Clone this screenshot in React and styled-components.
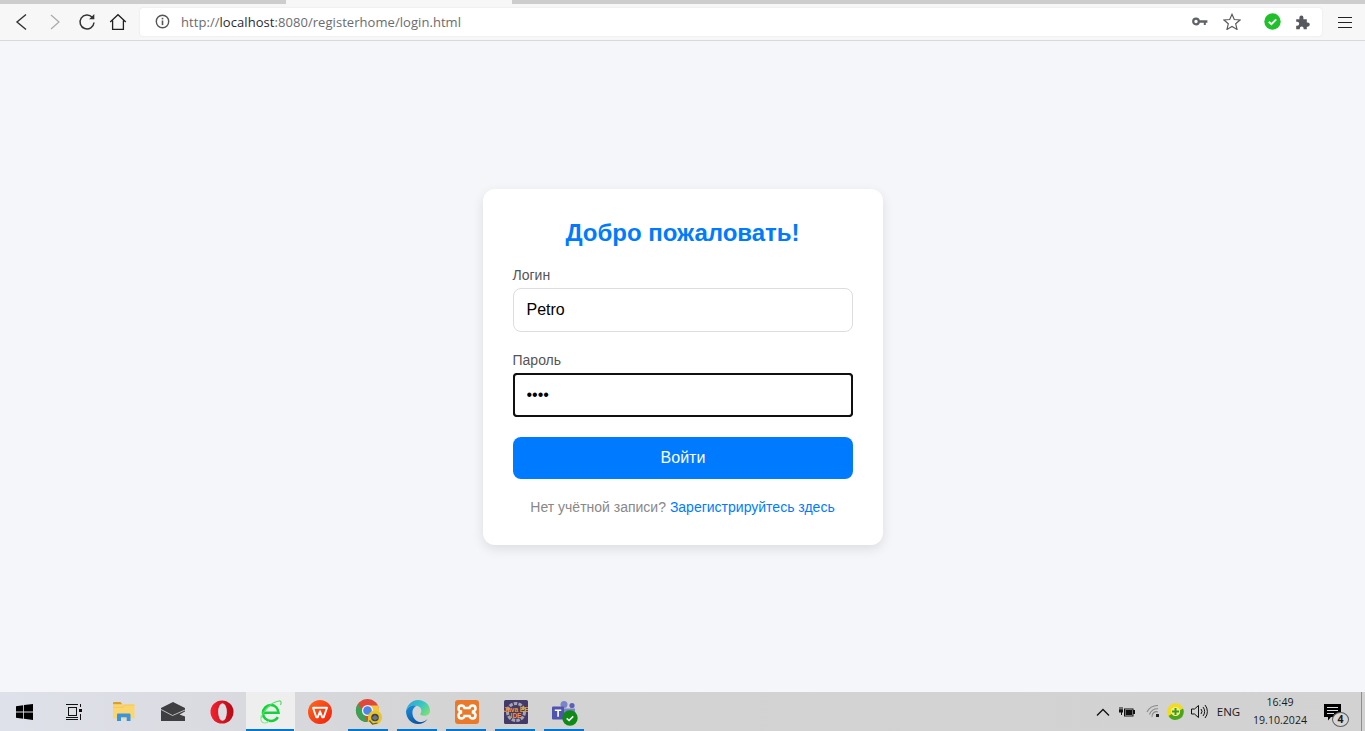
import styled, { createGlobalStyle } from "styled-components";

const GlobalStyle = createGlobalStyle`
  html, body {
    margin: 0;
    padding: 0;
    height: 100%;
    overflow: hidden;
  }
  * {
    box-sizing: border-box;
  }
`;

const Windowed = styled.div`
  height: 100vh;
  display: flex;
  flex-direction: column;
  background: #f4f6f9;
  font-family: "Liberation Sans", Arial, sans-serif;
`;

/* browser chrome */
const TabStrip = styled.div`
  height: 4px;
  display: flex;
  background: #cdcdcd;
`;
const TabPiece = styled.div`
  width: ${(p) => p.$w}px;
  background: ${(p) => p.$bg};
`;
const Toolbar = styled.div`
  height: 37px;
  display: flex;
  align-items: center;
  padding: 0 0 1px 4px;
  background: #f7f7f7;
  border-bottom: 1px solid #d9d9d9;
`;
const Slot = styled.div`
  width: ${(p) => p.$w}px;
  flex: none;
  display: flex;
  align-items: center;
  justify-content: center;
`;
const AddressBar = styled.div`
  width: 1182px;
  height: 28px;
  margin-left: 6px;
  padding: 0 4px 0 10px;
  display: flex;
  align-items: center;
  background: #fff;
  border-radius: 3px;
  box-shadow: 0 0 2px rgba(0, 0, 0, 0.1);
`;
const Url = styled.div`
  margin-left: 7px;
  flex: 1;
  font: 13px "Open Sans", sans-serif;
  letter-spacing: 0.055px;
  color: #6b6b70;
  b {
    font-weight: 400;
    color: #2a2a2e;
  }
`;
const MenuSlot = styled(Slot)`
  margin-left: 3px;
`;

/* login form */
const Main = styled.main`
  flex: 1;
  display: flex;
  align-items: center;
  justify-content: center;
`;
const Card = styled.form`
  width: 400px;
  padding: 30px;
  background: #fff;
  border-radius: 12px;
  box-shadow: 0 4px 12px rgba(0, 0, 0, 0.1);
`;
const Title = styled.h2`
  margin: 0 0 20px;
  text-align: center;
  font-size: 24px;
  line-height: 28px;
  font-weight: 700;
  color: #007bff;
`;
const Field = styled.div`
  margin-bottom: 20px;
`;
const Label = styled.label`
  display: block;
  margin-bottom: 5px;
  font-size: 14px;
  line-height: 16px;
  color: #555;
`;
const Input = styled.input`
  display: block;
  width: 100%;
  height: 44px;
  padding: 0 12px 0 13px;
  font: 16px "Liberation Sans", Arial, sans-serif;
  color: #000;
  background: #fff;
  border: ${(p) => (p.$focused ? "1px solid #101010" : "1px solid #ddd")};
  border-radius: ${(p) => (p.$focused ? "4px" : "8px")};
  outline: ${(p) => (p.$focused ? "2px solid #101010" : "none")};
  outline-offset: -2px;
`;
const Submit = styled.button`
  display: block;
  width: 100%;
  height: 42px;
  padding: 0 0 0 1px;
  border: 0;
  border-radius: 8px;
  background: #007bff;
  color: #fff;
  font: 16px "Liberation Sans", Arial, sans-serif;
`;
const Footer = styled.p`
  margin: 20px 0 0;
  text-align: center;
  font-size: 14px;
  line-height: 16px;
  color: #888;
`;
const Register = styled.a`
  color: #007bff;
  text-decoration: none;
`;

/* windows taskbar */
const Taskbar = styled.div`
  height: 39px;
  display: flex;
  align-items: stretch;
  background: linear-gradient(90deg, #dfe1ea 0, #d9dadf 240px, #d3d3d3 480px, #d2d2d2 100%);
`;
const TaskItem = styled.div`
  position: relative;
  width: ${(p) => p.$w || 49}px;
  flex: none;
  display: flex;
  align-items: center;
  justify-content: center;
  background: ${(p) => (p.$active ? "#eeeeee" : "transparent")};
  &::after {
    content: "";
    display: ${(p) => (p.$running ? "block" : "none")};
    position: absolute;
    bottom: 0;
    left: ${(p) => (p.$active ? 0 : 4)}px;
    right: ${(p) => (p.$active ? 1 : 5)}px;
    height: 2px;
    background: #0078d4;
  }
`;
const Tray = styled.div`
  margin-left: auto;
  display: flex;
  align-items: center;
  color: #1a1a1a;
  font-family: "Open Sans", sans-serif;
`;
const Lang = styled.div`
  width: 37px;
  text-align: center;
  font-size: 11.5px;
`;
const Clock = styled.div`
  width: 66px;
  text-align: center;
  font-size: 10.6px;
  line-height: 18px;
  padding-bottom: 1px;
`;
const Notify = styled.div`
  position: relative;
  width: 28px;
  height: 28px;
  padding-top: 6px;
  margin: 0 9px 0 11px;
`;
const NotifyCount = styled.span`
  position: absolute;
  right: 3px;
  bottom: -1px;
  width: 17px;
  height: 15px;
  border-radius: 50%;
  border: 1px solid #5c5c5c;
  background: #d6d6d6;
  font: 700 10.5px/13px "Open Sans", sans-serif;
  text-align: center;
`;
const ShowDesktop = styled.div`
  width: 1px;
  align-self: stretch;
  background: #8f8f8f;
  margin-right: 3px;
`;

const Back = () => (
  <svg width="14" height="18" viewBox="0 0 14 18" fill="none" stroke="#333" strokeWidth="1.4">
    <path d="M12 1.5 3 9l9 7.5" />
  </svg>
);
const Forward = () => (
  <svg width="14" height="18" viewBox="0 0 14 18" fill="none" stroke="#aaa" strokeWidth="1.2">
    <path d="m3 2 8 7-8 7" />
  </svg>
);
const Reload = () => (
  <svg width="18" height="18" viewBox="0 0 18 18" fill="none" stroke="#333" strokeWidth="1.5">
    <path d="M14.2 4.2A7 7 0 1 0 16 9.5" />
    <path d="M16.3 1v5.2h-5.2z" fill="#333" stroke="none" />
  </svg>
);
const Home = () => (
  <svg width="18" height="18" viewBox="0 0 18 18" fill="none" stroke="#222" strokeWidth="1.3">
    <path d="M1.2 9 9 1.7 16.8 9M3.6 7.5v8.8h10.8V7.5" />
  </svg>
);
const Info = () => (
  <svg width="15" height="15" viewBox="0 0 15 15">
    <circle cx="7.5" cy="7.5" r="6.2" fill="none" stroke="#555" strokeWidth="1.4" />
    <rect x="6.7" y="6.5" width="1.6" height="4.6" fill="#555" />
    <rect x="6.7" y="3.8" width="1.6" height="1.6" fill="#555" />
  </svg>
);
const KeyIcon = () => (
  <svg width="16" height="10" viewBox="0 0 16 10">
    <circle cx="4" cy="4.5" r="2.8" fill="none" stroke="#5f6368" strokeWidth="2.2" />
    <path d="M7 3.2h8.4v2.6h-1.6v2.3h-2V5.8H7z" fill="#5f6368" />
  </svg>
);
const Star = () => (
  <svg width="18" height="17" viewBox="0 0 18 17" fill="none" stroke="#5a5a5a" strokeWidth="1.2">
    <path d="m9 1.3 2.3 5.2 5.7.5-4.3 3.8 1.3 5.6L9 13.5l-5 2.9 1.3-5.6L1 7l5.7-.5z" />
  </svg>
);
const CheckBadge = () => (
  <svg width="17" height="17" viewBox="0 0 17 17">
    <circle cx="8.5" cy="8.5" r="8.2" fill="#1fc02a" />
    <path d="m4.8 8.8 2.6 2.4 4.8-4.8" fill="none" stroke="#fff" strokeWidth="1.9" />
  </svg>
);
const Puzzle = () => (
  <svg width="16" height="16" viewBox="0 0 16 16">
    <path
      d="M1.2 5.2h3.2V3.4a2 2 0 0 1 4 0v1.8h3.4v3.3h.9a2.1 2.1 0 0 1 0 4.2h-.9v2.6H8.6v-1a1.9 1.9 0 0 0-3.8 0v1H1.2v-3.6h1a2 2 0 0 0 0-4h-1z"
      fill="#55585e"
    />
  </svg>
);
const Burger = () => (
  <svg width="14" height="12" viewBox="0 0 14 12" stroke="#222" strokeWidth="1" shapeRendering="crispEdges">
    <path d="M0 1h14M0 6h14M0 11h14" />
  </svg>
);

const WinLogo = () => (
  <svg width="17" height="16" viewBox="0 0 17 16" fill="#000">
    <path d="M0 2.3 7.2 1.3v6.3H0zM8 1.1 17 0v7.6H8zM0 8.4h7.2v6.3L0 13.7zM8 8.4h9V16l-9-1.2z" />
  </svg>
);
const TaskView = () => (
  <svg width="16" height="16" viewBox="0 0 16 16" fill="none" stroke="#111" strokeWidth="1" shapeRendering="crispEdges">
    <path d="M0 .5h12M2.500 3.500h8v8h-8zM0 13.500h12M0 15.500h12" />
    <path d="M14.500 0v3M14.500 9.500V16" />
    <rect x="13" y="5" width="3" height="3" fill="#111" stroke="none" />
  </svg>
);
const Explorer = () => (
  <svg width="22" height="19" viewBox="0 0 22 19">
    <path d="M0 1a1 1 0 0 1 1-1h6.500l2 2.500H0z" fill="#dba02a" />
    <path d="M0 2.500h21.500v13a1 1 0 0 1-1 1H1a1 1 0 0 1-1-1z" fill="#fbd56e" />
    <path d="M0 4.800h9.500l2-2.300h10v1.200H12L10 6H0z" fill="#f6ca5c" />
    <path d="M4 19v-6.300A1.200 1.200 0 0 1 5.200 11.500h11.100a1.200 1.200 0 0 1 1.200 1.200V19h-3.800v-3.800H8V19z" fill="#3a93de" />
  </svg>
);
const Mail = () => (
  <svg width="24" height="19" viewBox="0 0 24 19">
    <path d="M0 6 12 0l12 6v13H0z" fill="#3f3f41" />
    <path d="M24 9.500 18.500 12.500 24 14.500z" fill="#dadbe0" />
    <path d="M0 7.500 11.500 13.500 24 8" fill="none" stroke="#dadbe0" strokeWidth="0.800" />
  </svg>
);
const Opera = () => (
  <svg width="24" height="24" viewBox="0 0 24 24">
    <defs>
      <linearGradient id="opera" x1="0" y1="0" x2="1" y2="0">
        <stop offset="0" stopColor="#f5222f" />
        <stop offset="1" stopColor="#b50a16" />
      </linearGradient>
    </defs>
    <circle cx="12" cy="12" r="11.500" fill="url(#opera)" />
    <ellipse cx="12.500" cy="12" rx="4.400" ry="8.800" fill="#dcdde2" />
  </svg>
);
const IeLogo = () => (
  <svg width="22" height="24" viewBox="0 0 22 24" fill="none">
    <path d="M3 12.800h15.500C18 8 14.800 5 10.800 5 6.500 5 3 8.500 3 13s3.500 8 8 8c3 0 5.500-1.400 6.800-3.800" stroke="#14d33a" strokeWidth="2.600" />
    <path d="M1.500 18C3 11 11 2 19 1c2.500-.3 2.500 1.800 1.500 4" stroke="#4fe062" strokeWidth="1.200" />
    <path d="M1.500 15C0 20 1.500 23.500 5 23c1.500-.2 3-1 4-1.800" stroke="#86ea92" strokeWidth="1.100" />
  </svg>
);
const Wps = () => (
  <svg width="24" height="24" viewBox="0 0 24 24">
    <defs>
      <linearGradient id="wps" x1="0" y1="0" x2="1" y2="1">
        <stop offset="0" stopColor="#ff6a1f" />
        <stop offset="1" stopColor="#ee1f0e" />
      </linearGradient>
    </defs>
    <circle cx="12" cy="12" r="12" fill="url(#wps)" />
    <path d="M5 7.800h14l-3.300 9.400h-1.500L12 11.300l-2.200 5.900H8.300z" fill="none" stroke="#fff" strokeWidth="1.900" strokeLinejoin="round" />
  </svg>
);
const Chrome = () => (
  <svg width="27" height="27" viewBox="-1 -1 27 27">
    <circle cx="11.500" cy="11.500" r="11.500" fill="#e0483a" />
    <path d="M2.200 4.700 8 14.800l3.500 8.200A11.500 11.500 0 0 1 2.200 4.700z" fill="#38a354" />
    <path d="M22 6.500a11.500 11.500 0 0 1-10.500 16.500L14 12l-2-5.500z" fill="#f6c53d" />
    <circle cx="11.500" cy="11.500" r="5.600" fill="#f2f2f2" />
    <circle cx="11.500" cy="11.500" r="4.300" fill="#4a86ea" />
    <circle cx="19" cy="18.500" r="7" fill="#e6c42a" />
    <circle cx="19" cy="18.500" r="3.800" fill="#3c4250" />
    <path d="m15.500 19 3.500-3 3.500 3-3.500 2.500z" fill="#6c7483" />
    <path d="M13.500 21.500l3 3.500 5-1" fill="none" stroke="#59613a" strokeWidth="1.200" />
  </svg>
);
const Edge = () => (
  <svg width="24" height="24" viewBox="0 0 24 24">
    <defs>
      <linearGradient id="edgeA" x1="0" y1="0" x2="1" y2="0.600">
        <stop offset="0" stopColor="#2a9fd8" />
        <stop offset="0.6" stopColor="#37c6c4" />
        <stop offset="1" stopColor="#74dd7c" />
      </linearGradient>
      <linearGradient id="edgeB" x1="0" y1="0" x2="0.500" y2="1">
        <stop offset="0" stopColor="#1c8fdc" />
        <stop offset="1" stopColor="#0c56a4" />
      </linearGradient>
    </defs>
    <path d="M0 11C1.500 4 6.500 0 12 0c7 0 12 5.200 12 10.500 0 3.700-2.800 5.300-5.500 5.300-2.300 0-4-.8-4.500-1.800.8-.7 1.400-1.700 1.400-3.300 0-3.200-3.400-5.500-7.400-5.500C4.500 5.200 1.500 7.500 0 11z" fill="url(#edgeA)" />
    <path d="M0 11c1.500-3.500 4.500-5.800 8-5.800 1 0 2 .2 3 .5C7.500 7 6 10 6.500 14c.6 5 4.500 8.500 9.500 8 2-.5 4-1.500 5.500-3-2 3.500-5.500 5-9.500 5C5 24 0 18 0 11z" fill="url(#edgeB)" />
  </svg>
);
const Xampp = () => (
  <svg width="24" height="24" viewBox="0 0 24 24">
    <rect width="24" height="24" rx="3" fill="#ea7a2a" />
    <path
      d="M6.500 5.500c1.700 0 2.600 1 3 2.500h5c.4-1.500 1.300-2.500 3-2.500 1.800 0 3 1.200 3 3s-1.300 2.700-2.500 3v1c1.200.3 2.500 1.200 2.500 3s-1.200 3-3 3c-1.700 0-2.600-1-3-2.500h-5c-.4 1.500-1.300 2.500-3 2.500-1.800 0-3-1.200-3-3s1.300-2.700 2.500-3v-1c-1.200-.3-2.500-1.200-2.500-3s1.200-3 3-3z"
      fill="none"
      stroke="#fff"
      strokeWidth="2.500"
    />
  </svg>
);
const JavaEe = () => (
  <svg width="24" height="24" viewBox="0 0 24 24">
    <rect width="24" height="24" rx="1.500" fill="#433a6a" />
    <circle cx="12" cy="12" r="8.500" fill="none" stroke="#a6a4ae" strokeWidth="3" strokeDasharray="3.500 1.200" />
    <text x="12" y="11.500" textAnchor="middle" fontFamily="Liberation Sans" fontWeight="700" fontSize="6.500" fill="#f09a2c">Java EE</text>
    <text x="12" y="18" textAnchor="middle" fontFamily="Liberation Sans" fontWeight="700" fontSize="6.500" fill="#f09a2c">IDE</text>
  </svg>
);
const Teams = () => (
  <svg width="28" height="28" viewBox="0 0 28 28">
    <circle cx="13" cy="6.500" r="3.500" fill="#7b83c9" />
    <circle cx="21" cy="7.500" r="2.600" fill="#5b62b5" />
    <path d="M12 10.500h12v8a5 5 0 0 1-5 5h-2a5 5 0 0 1-5-5z" fill="#7b83c9" />
    <rect x="1" y="8.500" width="12" height="13" rx="1" fill="#4f55ac" />
    <path d="M3.800 11.500h6.500v1.600H7.900v5.700H6.300v-5.700H3.800z" fill="#fff" />
    <circle cx="19" cy="20" r="7.700" fill="#0f8a16" />
    <path d="m15.700 20.300 2.400 2.200 4.100-4.100" fill="none" stroke="#fff" strokeWidth="1.600" />
  </svg>
);

const Chevron = () => (
  <svg width="14" height="8" viewBox="0 0 14 8" fill="none" stroke="#111" strokeWidth="1.300">
    <path d="m1 7.500 6-6 6 6" />
  </svg>
);
const Battery = () => (
  <svg width="16" height="10" viewBox="0 0 16 10" fill="#111">
    <path d="M.5 0h1v2.500h1V0h1v2.500h.5V5.500H3V8H2V5.500H0V2.500h.5z" />
    <path d="M5 1.500h9.500V3H16v4h-1.500v2.500H5zM6 2.500v6h7.500v-6z" />
    <rect x="6.500" y="3" width="6.500" height="5" />
  </svg>
);
const Wifi = () => (
  <svg width="15" height="15" viewBox="0 0 15 15" fill="none" stroke="#8a8a8a" strokeWidth="1.100">
    <path d="M1 8A12 12 0 0 1 12 1.500M3.500 10.500A8 8 0 0 1 12 4.800M6 13a4.500 4.500 0 0 1 6-5" />
    <rect x="10" y="10" width="3" height="3" fill="#222" stroke="none" />
  </svg>
);
const Guard = () => (
  <svg width="17" height="17" viewBox="0 0 17 17">
    <circle cx="8.500" cy="8.500" r="8.300" fill="#f2dc1e" />
    <path d="M16.800 8.500A8.300 8.300 0 0 1 1.500 13L5 10.800a4.500 4.500 0 0 0 8-3.600L16 5.500a8 8 0 0 1 .8 3z" fill="#4aa51e" />
    <circle cx="8.500" cy="8.500" r="4.500" fill="#f7ec8a" />
    <path d="M7.500 5h2v2.500H12v2H9.500V12h-2V9.500H5v-2h2.500z" fill="#3f9a1e" />
  </svg>
);
const Speaker = () => (
  <svg width="17" height="15" viewBox="0 0 17 15" fill="none" stroke="#111" strokeWidth="1">
    <path d="M.5 5v5h3l4 3.500v-12L3.500 5z" />
    <path d="M10 5a4 4 0 0 1 0 5M12 3a7 7 0 0 1 0 9M14 1a10 10 0 0 1 0 13" />
  </svg>
);
const Bubble = () => (
  <svg width="18" height="17" viewBox="0 0 18 17">
    <path d="M0 0h17v13H7l-3 3.500V13H0z" fill="#000" />
    <path d="M3 3.500h11M3 6.500h11M3 9.500h7" stroke="#ddd" strokeWidth="1" />
  </svg>
);

const pinned = [
  { id: "explorer", icon: <Explorer /> },
  { id: "mail", icon: <Mail /> },
  { id: "opera", icon: <Opera /> },
  { id: "ie", icon: <IeLogo />, active: true, running: true },
  { id: "wps", icon: <Wps /> },
  { id: "chrome", icon: <Chrome />, running: true },
  { id: "edge", icon: <Edge />, running: true },
  { id: "xampp", icon: <Xampp />, running: true },
  { id: "javaee", icon: <JavaEe />, running: true },
  { id: "teams", icon: <Teams />, running: true },
];

const App = () => {
  return (
    <Windowed>
      <GlobalStyle />
      <TabStrip>
        <TabPiece $w={286} $bg="#cdcdcd" />
        <TabPiece $w={226} $bg="#f7f7f7" />
      </TabStrip>
      <Toolbar>
        <Slot $w={34}><Back /></Slot>
        <Slot $w={34}><Forward /></Slot>
        <Slot $w={30}><Reload /></Slot>
        <Slot $w={32}><Home /></Slot>
        <AddressBar>
          <Slot $w={24}><Info /></Slot>
          <Url>http://<b>localhost</b>:8080/registerhome/login.html</Url>
          <Slot $w={32}><KeyIcon /></Slot>
          <Slot $w={32}><Star /></Slot>
          <Slot $w={8} />
          <Slot $w={32}><CheckBadge /></Slot>
          <Slot $w={30}><Puzzle /></Slot>
        </AddressBar>
        <MenuSlot $w={40}><Burger /></MenuSlot>
      </Toolbar>
      <Main>
        <Card onSubmit={(e) => e.preventDefault()}>
          <Title>Добро пожаловать!</Title>
          <Field>
            <Label htmlFor="login">Логин</Label>
            <Input id="login" type="text" value="Petro" readOnly />
          </Field>
          <Field>
            <Label htmlFor="password">Пароль</Label>
            <Input id="password" type="password" value="1234" readOnly $focused />
          </Field>
          <Submit type="submit">Войти</Submit>
          <Footer>
            Нет учётной записи? <Register href="#">Зарегистрируйтесь здесь</Register>
          </Footer>
        </Card>
      </Main>
      <Taskbar>
        <TaskItem $w={48}><WinLogo /></TaskItem>
        <TaskItem $w={51}><TaskView /></TaskItem>
        {pinned.map((app) => (
          <TaskItem key={app.id} $active={app.active} $running={app.running}>
            {app.icon}
          </TaskItem>
        ))}
        <Tray>
          <Slot $w={14}><Chevron /></Slot>
          <Slot $w={34}><Battery /></Slot>
          <Slot $w={18}><Wifi /></Slot>
          <Slot $w={26}><Guard /></Slot>
          <Slot $w={22}><Speaker /></Slot>
          <Lang>ENG</Lang>
          <Clock>
            16:49
            <br />
            19.10.2024
          </Clock>
          <Notify>
            <Slot $w={18}><Bubble /></Slot>
            <NotifyCount>4</NotifyCount>
          </Notify>
          <ShowDesktop />
        </Tray>
      </Taskbar>
    </Windowed>
  );
};

export default App;
